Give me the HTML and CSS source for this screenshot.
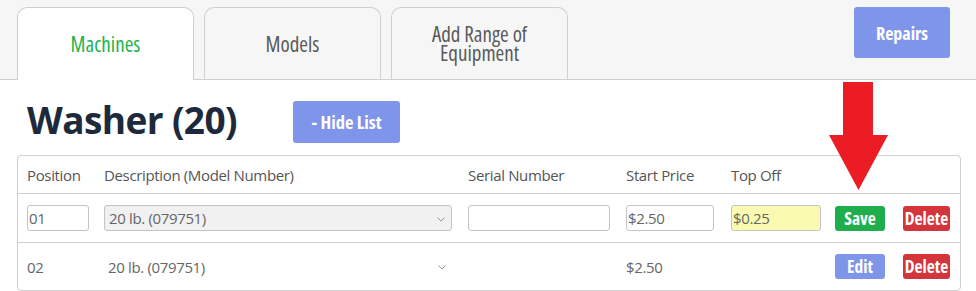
FILE: index.html
```html
<!DOCTYPE html>
<html>
<head>
<meta charset="utf-8">
<link rel="stylesheet" href="styles.css">
</head>
<body>
<div class="topbar">
  <div class="tab active">Machines</div>
  <div class="tab">Models</div>
  <div class="tab">Add Range of<br>Equipment</div>
  <button class="btn btn-blue repairs">Repairs</button>
</div>
<div class="main">
  <div class="title-row">
    <h1 class="title">Washer (20)</h1>
    <button class="btn btn-blue hide">- Hide List</button>
  </div>
  <div class="table">
    <div class="row head">
      <div>Position</div>
      <div>Description (Model Number)</div>
      <div>Serial Number</div>
      <div>Start Price</div>
      <div>Top Off</div>
      <div></div>
      <div></div>
    </div>
    <div class="row edit">
      <div><div class="input pos">01</div></div>
      <div><div class="input select">20 lb. (079751)<svg class="chev" width="8" height="5" viewBox="0 0 8 5"><path d="M0.5 0.5 L4 4 L7.5 0.5" fill="none" stroke="#999" stroke-width="1"/></svg></div></div>
      <div><div class="input serial"></div></div>
      <div><div class="input start">$2.50</div></div>
      <div><div class="input topoff">$0.25</div></div>
      <div><button class="btn btn-green sm">Save</button></div>
      <div><button class="btn btn-red sm del">Delete</button></div>
    </div>
    <div class="row view">
      <div>02</div>
      <div class="desc">20 lb. (079751)<svg class="chev" width="8" height="5" viewBox="0 0 8 5"><path d="M0.5 0.5 L4 4 L7.5 0.5" fill="none" stroke="#999" stroke-width="1"/></svg></div>
      <div></div>
      <div>$2.50</div>
      <div></div>
      <div><button class="btn btn-blue sm">Edit</button></div>
      <div><button class="btn btn-red sm del">Delete</button></div>
    </div>
  </div>
</div>
<svg class="arrow" width="60" height="109" viewBox="0 0 60 109">
  <path d="M14 0 H44 V53 H59 L29.5 108 L0 53 H14 Z" fill="#ec1c24"/>
</svg>
</body>
</html>
```
FILE: styles.css
```css
* { box-sizing: border-box; }
html, body { margin: 0; padding: 0; background: #fff; }
body {
  font-family: "Open Sans", "Liberation Sans", sans-serif;
  color: #555;
  width: 976px;
  height: 291px;
  overflow: hidden;
  position: relative;
}
.topbar {
  height: 80px;
  background: #f6f6f6;
  border-bottom: 1px solid #cfcfcf;
  display: flex;
  align-items: flex-end;
  padding-left: 17px;
  gap: 10px;
}
.tab {
  width: 177px;
  height: 72px;
  border: 1px solid #cfcfcf;
  border-bottom: none;
  border-radius: 10px 10px 0 0;
  background: #f6f6f6;
  display: flex;
  align-items: center;
  justify-content: center;
  text-align: center;
  font-size: 21px;
  line-height: 19px;
  color: #5a5a5a;
  padding-top: 1px;
  font-stretch: 75%;
}
.tab.active {
  background: #fff;
  color: #22b24c;
  height: 73px;
  margin-bottom: -1px;
}
.btn {
  border: none;
  border-radius: 3px;
  color: #fff;
  font-family: "Open Sans", "Liberation Sans", sans-serif;
  font-weight: 700;
  font-size: 17.5px;
  padding: 0;
  font-stretch: 75%;
}
.btn-blue { background: #7f95ea; }
.btn-green { background: #1fae4b; }
.btn-red { background: #d3353b; }
.repairs {
  align-self: flex-start;
  margin-top: 7px;
  margin-left: auto;
  margin-right: 26px;
  width: 96px;
  height: 51px;
  font-size: 18px;
}
.main {
  padding: 0 16px 0 17px;
}
.title-row {
  display: flex;
  align-items: center;
  height: 75px;
  padding-left: 10px;
}
.title {
  margin: 0;
  font-size: 37px;
  font-weight: 700;
  color: #1d2a3b;
  letter-spacing: -0.6px;
  width: 266px;
  margin-top: 4px;
}
.hide {
  width: 107px;
  height: 42px;
  margin-top: 8px;
  font-size: 18.5px;
}
.table {
  border: 1px solid #cfcfcf;
  border-radius: 4px;
  width: 944px;
}
.row {
  display: grid;
  grid-template-columns: 77px 364px 158px 105px 104px 68px 1fr;
  padding-left: 9px;
  align-items: center;
  font-size: 15px;
  color: #666;
  letter-spacing: -0.35px;
}
.row.head {
  height: 38px;
  color: #555;
  border-bottom: 1px solid #cfcfcf;
  padding-top: 1px;
}
.row.edit {
  height: 49px;
  border-bottom: 1px solid #cfcfcf;
}
.row.view {
  height: 47px;
}
.input {
  height: 26px;
  border: 1px solid #c4c4c4;
  border-radius: 3px;
  background: #fff;
  font-size: 15px;
  line-height: 24px;
  padding-left: 1px;
  color: #666;
  position: relative;
}
.pos { width: 62px; }
.select { width: 348px; background: #f1f1f1; padding-left: 4px; }
.serial { width: 142px; }
.start { width: 88px; }
.topoff { width: 90px; background: #fafab1; }
.chev { position: absolute; right: 6px; top: 11px; }
.desc { position: relative; padding-left: 4px; width: 348px; }
.desc .chev { top: 8px; }
.sm {
  height: 25px;
  width: 50px;
  line-height: 25px;
  display: block;
}
.del { width: 47px; }
.arrow {
  position: absolute;
  left: 829px;
  top: 82px;
}
```
